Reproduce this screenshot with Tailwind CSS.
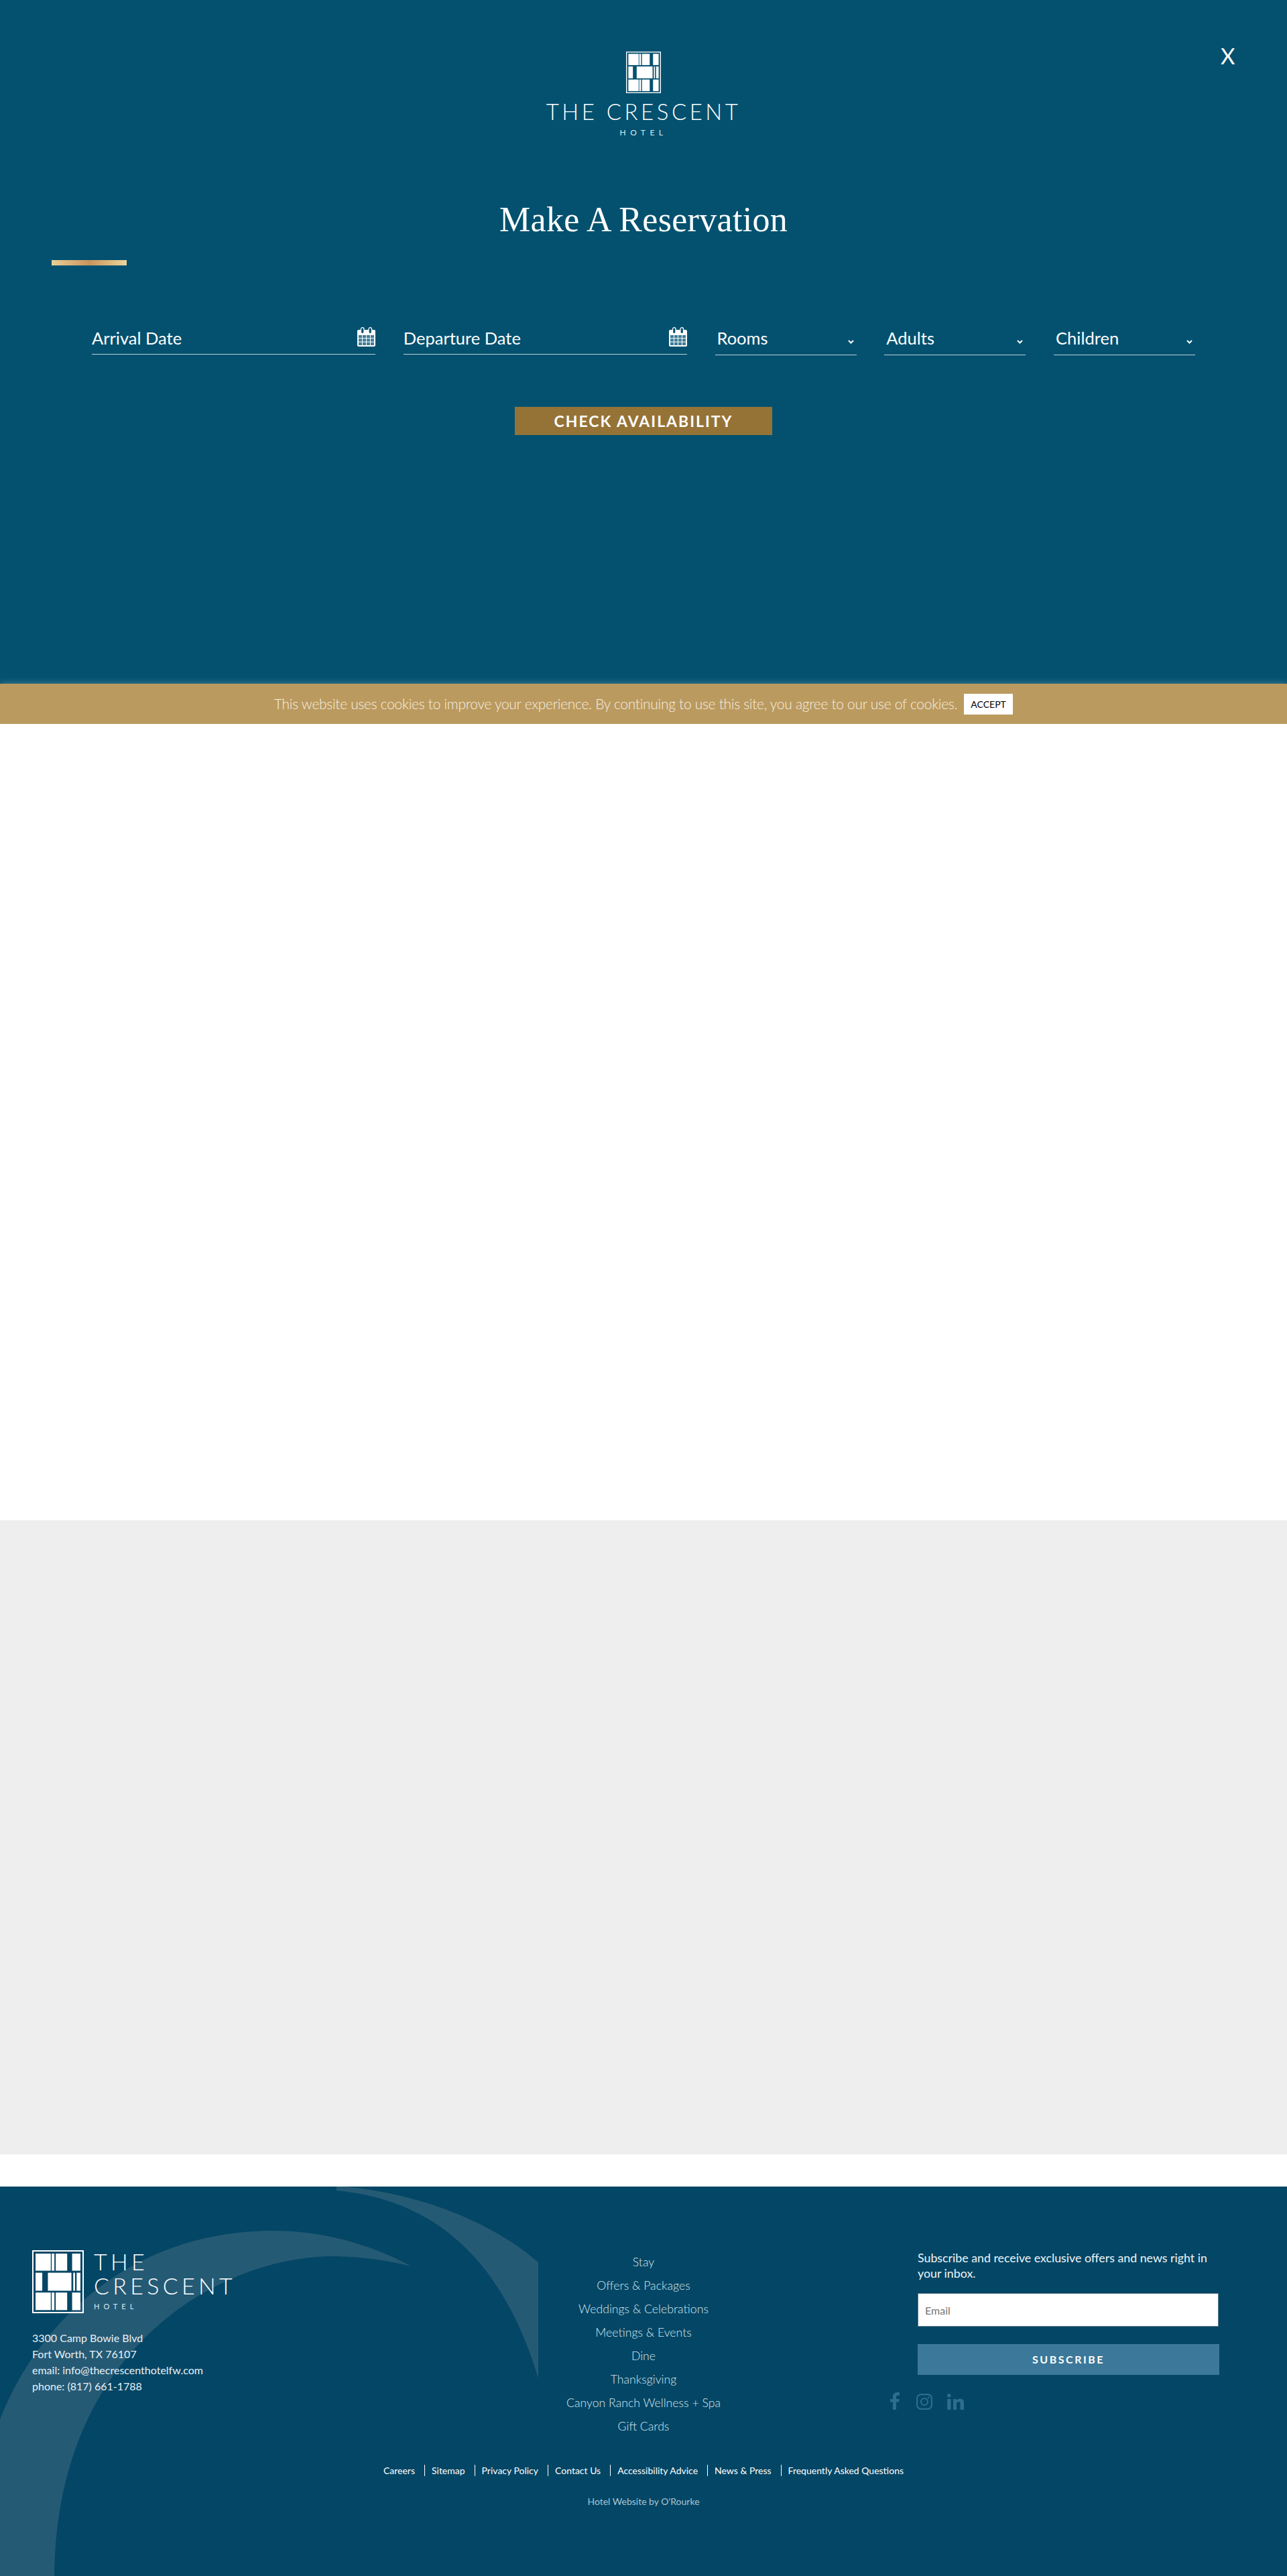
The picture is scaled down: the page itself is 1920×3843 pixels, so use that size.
<!DOCTYPE html>
<html lang="en">
  <head>
    <meta charset="UTF-8" />
    <meta name="viewport" content="width=device-width, initial-scale=1.0" />
    <title>Make A Reservation | The Crescent Hotel</title>
    <script src="https://cdn.jsdelivr.net/npm/@tailwindcss/browser@4"></script>
  </head>
  <body class="bg-white text-white font-['Lato',sans-serif]">
    <svg class="hidden">
      <symbol id="logo-mark" viewBox="0 0 230 280" preserveAspectRatio="none">
        <rect x="3" y="3" width="224" height="274" fill="none" stroke="#fff" stroke-width="6" />
        <g fill="#fff">
          <rect x="15" y="15" width="68" height="76" />
          <rect x="87" y="15" width="12" height="76" />
          <rect x="105" y="15" width="51" height="76" />
          <rect x="178" y="15" width="37" height="76" />
          <rect x="15" y="100" width="30" height="80" />
          <rect x="70" y="100" width="105" height="80" />
          <rect x="183" y="100" width="8" height="80" />
          <rect x="198" y="100" width="17" height="80" />
          <rect x="15" y="188" width="68" height="78" />
          <rect x="87" y="188" width="12" height="78" />
          <rect x="105" y="188" width="51" height="78" />
          <rect x="178" y="188" width="37" height="78" />
        </g>
      </symbol>
      <symbol id="calendar" viewBox="0 0 27 29">
        <rect x="0" y="4" width="27" height="25" rx="2" fill="#fff" />
        <rect x="5.500" y="0.700" width="4.500" height="9" rx="2.200" fill="#04516f" stroke="#fff" stroke-width="1.300" />
        <rect x="17" y="0.700" width="4.500" height="9" rx="2.200" fill="#04516f" stroke="#fff" stroke-width="1.300" />
        <g fill="#3f7d98">
          <rect x="2" y="12" width="5" height="4.300" /><rect x="8" y="12" width="5" height="4.300" /><rect x="14" y="12" width="5" height="4.300" /><rect x="20" y="12" width="5" height="4.300" />
          <rect x="2" y="17.300" width="5" height="4.300" /><rect x="8" y="17.300" width="5" height="4.300" /><rect x="14" y="17.300" width="5" height="4.300" /><rect x="20" y="17.300" width="5" height="4.300" />
          <rect x="2" y="22.600" width="5" height="4.400" /><rect x="8" y="22.600" width="5" height="4.400" /><rect x="14" y="22.600" width="5" height="4.400" /><rect x="20" y="22.600" width="5" height="4.400" />
        </g>
      </symbol>
      <symbol id="chevron" viewBox="0 0 9 6">
        <path d="M1 1l3.500 3.500L8 1" fill="none" stroke="#fff" stroke-width="2" />
      </symbol>
    </svg>

    <!-- Reservation panel -->
    <section class="relative h-[1020px] bg-[#04516f]">
      <button class="absolute left-[1821px] top-[63px] text-[33px] leading-[40px]">X</button>

      <div class="flex flex-col items-center pt-[77px]">
        <svg class="w-[52px] h-[62px]"><use href="#logo-mark" /></svg>
        <div class="mt-[7px] text-[33px] leading-[40px] font-light tracking-[4.5px] whitespace-nowrap">THE CRESCENT</div>
        <div class="mt-[4px] text-[12px] leading-[16px] tracking-[6.500px] text-[#dbe8ee]">HOTEL</div>
        <h1 class="mt-[92px] text-[52px] leading-[60px] tracking-[0.3px] font-['Liberation_Serif',serif]">Make A Reservation</h1>
      </div>

      <div class="ml-[77px] mt-[30px] w-[112px] h-[8px] bg-gradient-to-r from-[#e8cf97] via-[#c9955c] to-[#edd59b]"></div>

      <!-- Booking form -->
      <form class="mt-[90px] mx-[137px] flex justify-between items-start text-[25.500px] leading-[36px]">
        <div class="w-[423px] h-[43px] flex justify-between items-start border-b border-[#b9d0da]">
          <span>Arrival Date</span>
          <svg class="w-[27px] h-[29px] mt-[2px]"><use href="#calendar" /></svg>
        </div>
        <div class="w-[423px] h-[43px] flex justify-between items-start border-b border-[#b9d0da]">
          <span>Departure Date</span>
          <svg class="w-[27px] h-[29px] mt-[2px]"><use href="#calendar" /></svg>
        </div>
        <div class="w-[211px] h-[44px] pl-[3px] pr-[4px] flex justify-between items-start border-b border-[#b9d0da]">
          <span>Rooms</span>
          <svg class="w-[9px] h-[6px] mt-[21px]"><use href="#chevron" /></svg>
        </div>
        <div class="w-[211px] h-[44px] pl-[3px] pr-[4px] flex justify-between items-start border-b border-[#b9d0da]">
          <span>Adults</span>
          <svg class="w-[9px] h-[6px] mt-[21px]"><use href="#chevron" /></svg>
        </div>
        <div class="w-[211px] h-[44px] pl-[3px] pr-[4px] flex justify-between items-start border-b border-[#b9d0da]">
          <span>Children</span>
          <svg class="w-[9px] h-[6px] mt-[21px]"><use href="#chevron" /></svg>
        </div>
      </form>

      <div class="mt-[77px] flex justify-center">
        <button class="w-[384px] h-[42px] bg-[#957337] text-[23px] font-bold tracking-[2px]">CHECK AVAILABILITY</button>
      </div>
    </section>

    <!-- Cookie notice -->
    <div class="relative h-[60px] bg-[#bb9a5f] shadow-[0_0_10px_rgba(255,255,255,0.3)] flex items-center justify-center gap-[10px]">
      <p class="text-[21px] tracking-[-0.3px] font-light text-[#f5eee0] whitespace-nowrap">This website uses cookies to improve your experience. By continuing to use this site, you agree to our use of cookies.</p>
      <button class="w-[73px] h-[31px] bg-white text-black text-[14px]">ACCEPT</button>
    </div>

    <div class="h-[1188px] bg-white"></div>
    <div class="h-[946px] bg-[#eeeeee]"></div>
    <div class="h-[48px] bg-white"></div>

    <!-- Footer -->
    <footer class="relative h-[581px] overflow-hidden bg-[#044665]">
      <svg class="absolute left-0 top-0 w-[820px] h-[581px]" viewBox="0 0 820 581">
        <g fill="#255a75">
          <path d="M502 -1 C620 8 730 50 803 113 V286 C750 110 650 20 502 6 Z" />
          <path d="M0 347 C50 220 180 66 408 66 C480 66 550 85 614 119 C570 108 530 104 497 104 C330 104 84 240 81 581 H0 Z" />
        </g>
      </svg>

      <div class="relative flex pt-[95px] pl-[48px]">
        <div class="w-[712px]">
          <div class="flex gap-[15px]">
            <svg class="w-[77px] h-[94px]"><use href="#logo-mark" /></svg>
            <div class="-mt-px">
              <div class="text-[34px] leading-[36px] font-light tracking-[5.300px]">THE</div>
              <div class="text-[34px] leading-[36px] font-light tracking-[5.300px]">CRESCENT</div>
              <div class="mt-[5px] text-[11px] leading-[16px] tracking-[6px] text-[#dbe8ee]">HOTEL</div>
            </div>
          </div>
          <address class="mt-[25px] not-italic text-[16px] leading-[24px] text-[#e6f0f5]">
            <div>3300 Camp Bowie Blvd</div>
            <div>Fort Worth, TX 76107</div>
            <div>email: info@thecrescenthotelfw.com</div>
            <div>phone: (817) 661-1788</div>
          </address>
        </div>

        <nav class="w-[400px] text-center text-[17.700px] leading-[35px] font-light text-[#d6e7ef]">
          <a href="#" class="block">Stay</a>
          <a href="#" class="block">Offers &amp; Packages</a>
          <a href="#" class="block">Weddings &amp; Celebrations</a>
          <a href="#" class="block">Meetings &amp; Events</a>
          <a href="#" class="block">Dine</a>
          <a href="#" class="block">Thanksgiving</a>
          <a href="#" class="block">Canyon Ranch Wellness + Spa</a>
          <a href="#" class="block">Gift Cards</a>
        </nav>

        <div class="ml-[209px] w-[450px]">
          <p class="text-[17.800px] leading-[22.5px] text-[#eef5f8]">Subscribe and receive exclusive offers and news right in your inbox.</p>
          <input type="text" placeholder="Email" class="mt-[19px] block w-[449px] h-[50px] bg-white border border-[#5d7b8a] px-[10px] text-[16px] text-gray-700 placeholder:text-[#757575]" />
          <button class="mt-[26px] block w-[450px] h-[46px] bg-[#3c7899] text-[16px] font-bold tracking-[2.500px]">SUBSCRIBE</button>
          <div class="mt-[26px] -ml-[41px] flex items-start text-[#2e6d8d]">
            <svg class="w-[14px] h-[26px]" viewBox="0 0 14 26" fill="currentColor"><path d="M4 26V14.500H0V10h4V6.700C4 2.300 6.600 0 10.500 0c1.500 0 2.800.1 3.500.2v4.200h-2.400C9.700 4.400 9 5.400 9 6.900V10h4.700l-.7 4.500H9V26z" /></svg>
            <svg class="ml-[25px] mt-[2px] w-[24px] h-[24px]" viewBox="0 0 24 24" fill="none" stroke="currentColor" stroke-width="2.200"><rect x="1.100" y="1.100" width="21.800" height="21.800" rx="6" /><circle cx="12" cy="12" r="5" /><circle cx="18.200" cy="5.800" r="1.400" fill="currentColor" stroke="none" /></svg>
            <svg class="ml-[22px] mt-[2px] w-[25px] h-[24px]" viewBox="0 0 25 24" fill="currentColor"><circle cx="2.800" cy="2.800" r="2.800" /><rect x="0.200" y="8" width="5.300" height="16" /><path d="M9 8h5.200v2.300c.8-1.500 2.600-2.700 5.100-2.700 5 0 5.700 3.300 5.700 7.500V24h-5.400v-7.800c0-1.900 0-4.200-2.600-4.200s-3 2-3 4.100V24H9z" /></svg>
          </div>
        </div>
      </div>

      <!-- Legal links -->
      <div class="relative mt-[40px] flex justify-center text-[14px] leading-[17px]">
        <a href="#" class="pr-[14px]">Careers</a>
        <a href="#" class="pl-[10px] pr-[14px] border-l border-white">Sitemap</a>
        <a href="#" class="pl-[10px] pr-[14px] border-l border-white">Privacy Policy</a>
        <a href="#" class="pl-[10px] pr-[14px] border-l border-white">Contact Us</a>
        <a href="#" class="pl-[10px] pr-[14px] border-l border-white">Accessibility Advice</a>
        <a href="#" class="pl-[10px] pr-[14px] border-l border-white">News &amp; Press</a>
        <a href="#" class="pl-[10px] border-l border-white">Frequently Asked Questions</a>
      </div>
      <p class="relative mt-[29px] text-center text-[14px] leading-[17px] text-[#a9c5d4]">Hotel Website by O'Rourke</p>
    </footer>
  </body>
</html>
